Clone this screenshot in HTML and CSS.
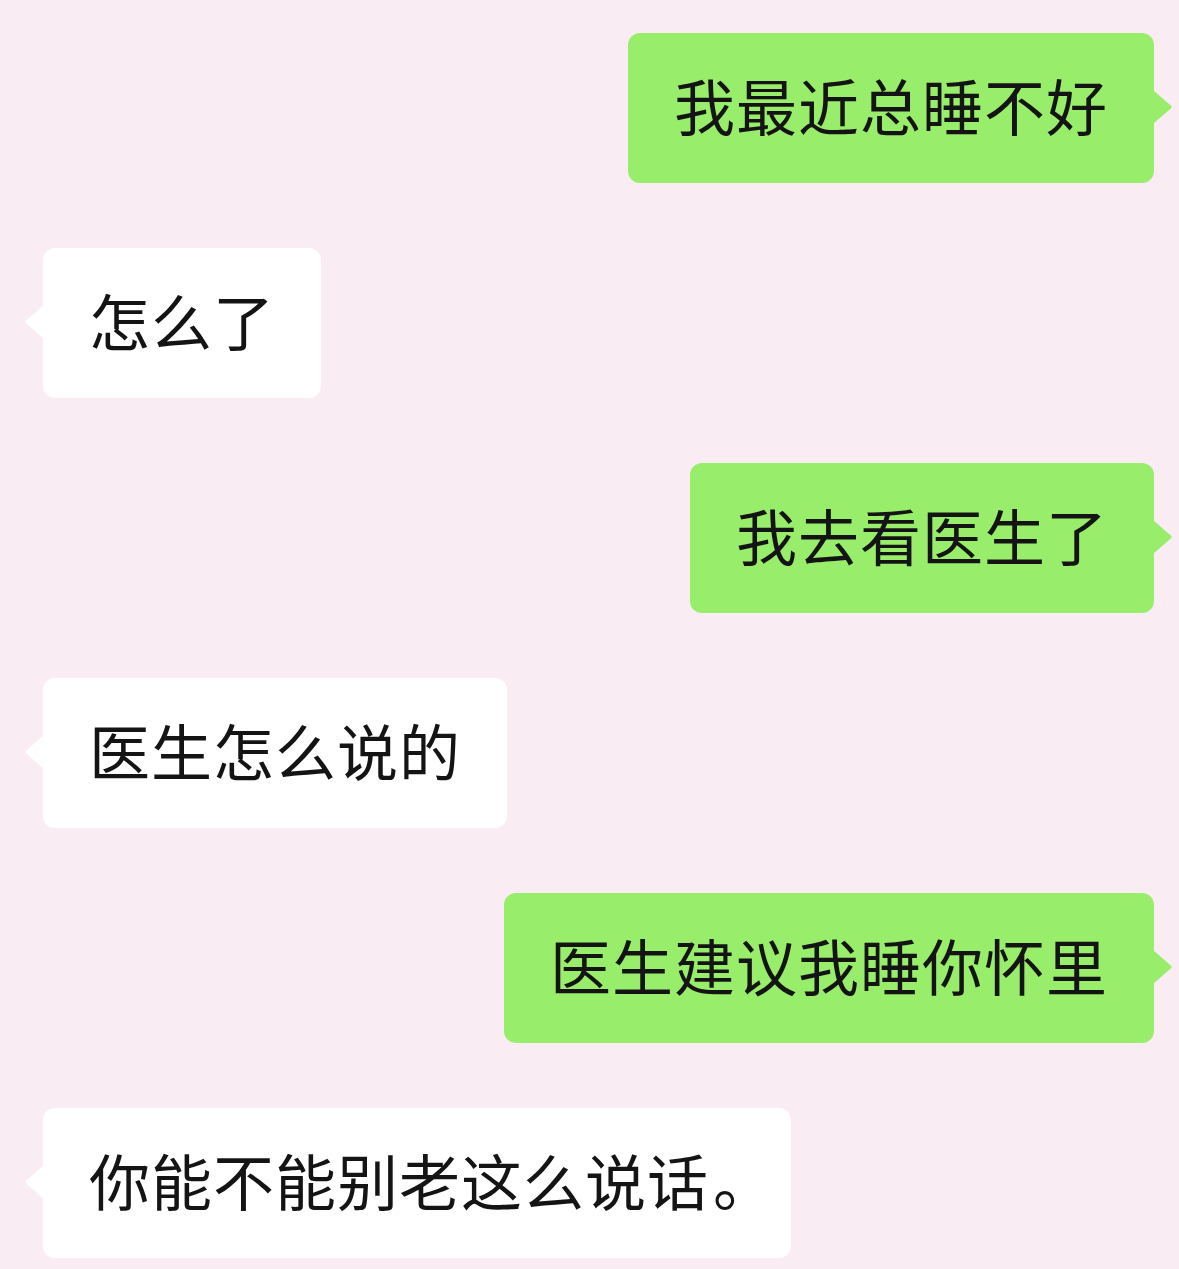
FILE: index.html
```html
<!DOCTYPE html>
<html lang="zh-CN">
<head>
    <meta charset="UTF-8">
    <meta name="viewport" content="width=device-width, initial-scale=1.0">
    <title>聊天</title>
    <link rel="stylesheet" href="styles.css">
</head>
<body>
    <div class="chat">
        <div class="bubble me">我最近总睡不好</div>
        <div class="bubble other">怎么了</div>
        <div class="bubble me">我去看医生了</div>
        <div class="bubble other">医生怎么说的</div>
        <div class="bubble me">医生建议我睡你怀里</div>
        <div class="bubble other">你能不能别老这么说话<span class="stop">。</span></div>
    </div>
</body>
</html>
```

FILE: styles.css
```css
body{
    margin: 0;
    background: #f9edf3;
    font-family: "Noto Sans CJK SC", "Noto Sans", sans-serif;
}
.chat{
    display: flex;
    flex-direction: column;
    gap: 65px;
    padding: 33px 25px 12px;
}
.bubble{
    position: relative;
    height: 150px;
    box-sizing: border-box;
    display: flex;
    align-items: center;
    padding: 0 46px 8px;
    border-radius: 12px;
    font-size: 61px;
    letter-spacing: 1px;
    color: #141414;
}
.bubble::after{
    content: "";
    position: absolute;
    top: 57px;
    width: 19px;
    height: 34px;
}
.me{
    align-self: flex-end;
    background: #98ed6b;
}
.me::after{
    right: -18px;
    background: #98ed6b;
    clip-path: polygon(0 0, 92% 45%, 100% 50%, 92% 55%, 0 100%);
}
.other{
    align-self: flex-start;
    margin-left: 18px;
    background: #ffffff;
}
.other::after{
    left: -18px;
    background: #ffffff;
    clip-path: polygon(100% 0, 8% 45%, 0 50%, 8% 55%, 100% 100%);
}
.stop{
    margin-left: 4px;
    margin-right: -30px;
}
```
